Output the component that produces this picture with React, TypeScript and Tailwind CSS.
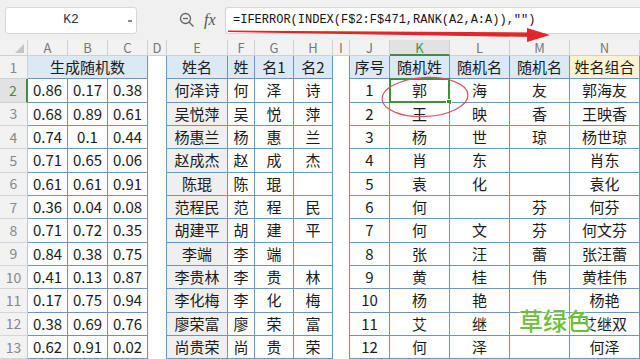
import React from "react";

const rows: string[][] = [
  ["0.86", "0.17", "0.38", "何泽诗", "何", "泽", "诗", "1", "郭", "海", "友", "郭海友"],
  ["0.68", "0.89", "0.61", "吴悦萍", "吴", "悦", "萍", "2", "王", "映", "香", "王映香"],
  ["0.74", "0.1", "0.44", "杨惠兰", "杨", "惠", "兰", "3", "杨", "世", "琼", "杨世琼"],
  ["0.71", "0.65", "0.06", "赵成杰", "赵", "成", "杰", "4", "肖", "东", "", "肖东"],
  ["0.61", "0.61", "0.91", "陈琨", "陈", "琨", "", "5", "袁", "化", "", "袁化"],
  ["0.36", "0.04", "0.08", "范程民", "范", "程", "民", "6", "何", "", "芬", "何芬"],
  ["0.71", "0.72", "0.35", "胡建平", "胡", "建", "平", "7", "何", "文", "芬", "何文芬"],
  ["0.84", "0.38", "0.75", "李端", "李", "端", "", "8", "张", "汪", "蕾", "张汪蕾"],
  ["0.41", "0.13", "0.87", "李贵林", "李", "贵", "林", "9", "黄", "桂", "伟", "黄桂伟"],
  ["0.17", "0.75", "0.94", "李化梅", "李", "化", "梅", "10", "杨", "艳", "", "杨艳"],
  ["0.38", "0.69", "0.76", "廖荣富", "廖", "荣", "富", "11", "艾", "继", "", "艾继双"],
  ["0.62", "0.91", "0.02", "尚贵荣", "尚", "贵", "荣", "12", "何", "泽", "", "何泽"],
];

const letters = ["A", "B", "C", "D", "E", "F", "G", "H", "I", "J", "K", "L", "M", "N"];

const cell = "flex items-center justify-center border-r border-b border-[#6b95c3] text-[15px] text-[#1a1a1a]";
const gap = "border-r border-[#6b95c3] bg-white";

export default function App() {
  return (
    <div
      className="relative w-[640px] h-[359px] overflow-hidden bg-white"
      style={{ fontFamily: '"Noto Sans CJK SC", "Noto Sans", sans-serif' }}
    >
      {/* toolbar */}
      <div className="flex h-[40px] items-center bg-[#f0f0f0] pl-[5px]">
        <div className="relative flex h-[27px] w-[132px] items-center justify-center rounded-[3px] border border-[#d6d6d6] bg-white">
          <span className="text-[13px] text-[#333]" style={{ fontFamily: '"Liberation Mono", monospace' }}>
            K2
          </span>
          <span className="absolute right-[4px] top-[12px] h-[2px] w-[4px] bg-[#888]" />
        </div>
        <div className="flex w-[88px] items-center gap-[9px] pl-[42px]">
          <svg width="16" height="16" viewBox="0 0 16 16" fill="none" stroke="#666" strokeWidth="1.3">
            <circle cx="6.5" cy="6.5" r="5" />
            <line x1="4" y1="6.5" x2="9" y2="6.5" />
            <line x1="10.2" y1="10.2" x2="14.5" y2="14.5" />
          </svg>
          <span className="text-[16px] italic text-[#555]" style={{ fontFamily: '"Liberation Serif", serif' }}>
            fx
          </span>
        </div>
        <div className="flex h-[27px] flex-1 items-center rounded-l-[3px] border border-r-0 border-[#d6d6d6] bg-white pl-[7px]">
          <span className="text-[12px] text-[#111]" style={{ fontFamily: '"Liberation Mono", monospace' }}>
            =IFERROR(INDEX(F$2:F$471,RANK(A2,A:A)),"")
          </span>
        </div>
      </div>

      {/* sheet */}
      <div className="grid grid-cols-[28px_40px_40px_40px_19px_61px_27px_39px_39px_17px_40px_60px_60px_60px_1fr] grid-rows-[16px] auto-rows-[23.35px]">
        <div className="relative border-r border-b border-[#d0d0d0] bg-[#f2f2f2]">
          <svg className="absolute right-[3px] bottom-[2px]" width="9" height="9" viewBox="0 0 9 9">
            <polygon points="9,0 9,9 0,9" fill="#c4c4c4" />
          </svg>
        </div>
        {letters.map((l) => (
          <div
            key={l}
            className={
              l === "K"
                ? "flex items-center justify-center border-r border-b-2 border-r-[#d0d0d0] border-b-[#3f8f3f] bg-[#e2e2e2] text-[13px] leading-none text-[#3f8f3f]"
                : "flex items-center justify-center border-r border-b border-[#d0d0d0] bg-[#f2f2f2] text-[13px] leading-none text-[#777]"
            }
          >
            {l}
          </div>
        ))}

        {/* row 1 */}
        <div className="flex items-center justify-center border-r border-b border-[#d0d0d0] bg-[#f2f2f2] text-[14px] text-[#888]">
          1
        </div>
        <div className={`${cell} col-span-3 bg-[#dce8f4]`}>生成随机数</div>
        <div className={gap} />
        <div className={`${cell} bg-[#dce8f4]`}>姓名</div>
        <div className={`${cell} bg-[#dce8f4]`}>姓</div>
        <div className={`${cell} bg-[#dce8f4]`}>名1</div>
        <div className={`${cell} bg-[#dce8f4]`}>名2</div>
        <div className={gap} />
        <div className={`${cell} bg-[#dce8f4]`}>序号</div>
        <div className={`${cell} bg-[#dce8f4]`}>随机姓</div>
        <div className={`${cell} bg-[#dce8f4]`}>随机名</div>
        <div className={`${cell} bg-[#dce8f4]`}>随机名</div>
        <div className={`${cell} bg-[#fdf2cf]`}>姓名组合</div>

        {rows.map((r, i) => {
          const n = i + 2;
          const sel = n === 2;
          return (
            <React.Fragment key={n}>
              <div
                className={
                  sel
                    ? "flex items-center justify-center border-r-2 border-b border-r-[#3f8f3f] border-b-[#d0d0d0] bg-[#e2e2e2] text-[14px] text-[#3f8f3f]"
                    : "flex items-center justify-center border-r border-b border-r-[#b9c7d6] border-b-[#d6d6d6] bg-[#f2f2f2] text-[14px] text-[#888]"
                }
              >
                {n}
              </div>
              <div className={`${cell} bg-white`}>{r[0]}</div>
              <div className={`${cell} bg-white`}>{r[1]}</div>
              <div className={`${cell} bg-white`}>{r[2]}</div>
              <div className={gap} />
              <div className={`${cell} bg-[#efefef]`}>{r[3]}</div>
              <div className={`${cell} bg-white`}>{r[4]}</div>
              <div className={`${cell} bg-white`}>{r[5]}</div>
              <div className={`${cell} bg-white`}>{r[6]}</div>
              <div className={gap} />
              <div className={`${cell} bg-white`}>{r[7]}</div>
              <div className={`${cell} relative bg-white`}>
                {r[8]}
                {sel && (
                  <div className="absolute inset-[-1px] border-2 border-[#3f8f3f]">
                    <span className="absolute right-[-4px] bottom-[-4px] h-[6px] w-[6px] border border-white bg-[#3f8f3f]" />
                  </div>
                )}
              </div>
              <div className={`${cell} bg-white`}>{r[9]}</div>
              <div className={`${cell} bg-white`}>{r[10]}</div>
              <div className={`${cell} bg-white`}>{r[11]}</div>
            </React.Fragment>
          );
        })}
      </div>

      {/* annotations */}
      <svg className="pointer-events-none absolute left-0 top-0" width="640" height="359" viewBox="0 0 640 359">
        <polygon points="228,30.5 532,32.5 532,37 228,32" fill="#e3262b" />
        <polygon points="527,28 550,35 527,42" fill="#e3262b" />
        <ellipse
          cx="425"
          cy="97"
          rx="43"
          ry="19.5"
          fill="none"
          stroke="#d9525f"
          strokeWidth="1.2"
          transform="rotate(-3 425 97)"
        />
      </svg>
      <div
        className="absolute left-[519px] top-[308px] text-[24px] font-medium leading-none text-[#6cbf3a]"
        style={{ textShadow: "0 0 2px #fff, 0 0 2px #fff" }}
      >
        草绿色
      </div>
    </div>
  );
}
